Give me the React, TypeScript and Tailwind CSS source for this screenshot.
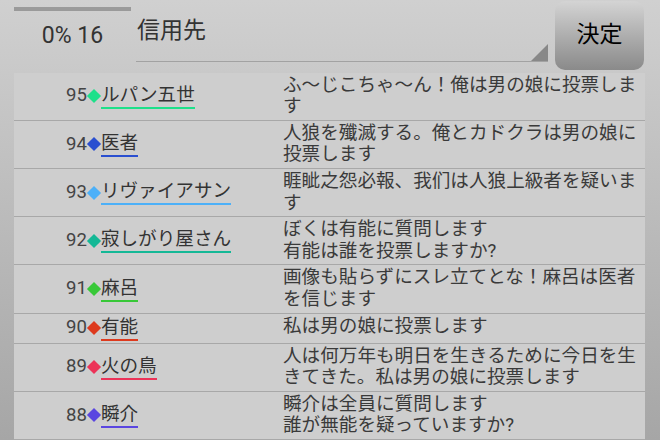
import React from "react";

interface Vote {
  no: number;
  name: string;
  color: string;
  message: string;
}

const votes: Vote[] = [
  { no: 95, name: "ルパン五世", color: "#1ee08a", message: "ふ～じこちゃ～ん！俺は男の娘に投票します" },
  { no: 94, name: "医者", color: "#2a4fd0", message: "人狼を殲滅する。俺とカドクラは男の娘に投票します" },
  { no: 93, name: "リヴァイアサン", color: "#4cb0f8", message: "睚眦之怨必報、我们は人狼上級者を疑います" },
  { no: 92, name: "寂しがり屋さん", color: "#14b896", message: "ぼくは有能に質問します\n有能は誰を投票しますか?" },
  { no: 91, name: "麻呂", color: "#38c838", message: "画像も貼らずにスレ立てとな！麻呂は医者を信じます" },
  { no: 90, name: "有能", color: "#dd3a1e", message: "私は男の娘に投票します" },
  { no: 89, name: "火の鳥", color: "#ec3358", message: "人は何万年も明日を生きるために今日を生きてきた。私は男の娘に投票します" },
  { no: 88, name: "瞬介", color: "#5a46e0", message: "瞬介は全員に質問します\n誰が無能を疑っていますか?" },
];

const VoteRow: React.FC<{ vote: Vote }> = ({ vote }) => (
  <div className="flex border-b border-[#a8a8a8] py-[2px]">
    <div className="w-[269px] flex-none flex items-center pl-[52px] text-[18.6px] leading-[21.6px]">
      <span className="text-[#444]">{vote.no}</span>
      <span className="w-[10px] h-[10px] rotate-45 mx-[2px]" style={{ backgroundColor: vote.color }} />
      <span className="text-[#333] border-b-2 leading-[23px]" style={{ borderColor: vote.color }}>
        {vote.name}
      </span>
    </div>
    <div className="flex-1 min-w-0 whitespace-pre-wrap break-all text-[18.6px] leading-[21.6px] text-[#3a3a3a]">
      {vote.message}
    </div>
  </div>
);

export default function App() {
  return (
    <div
      className="w-[660px] h-[440px] overflow-hidden bg-gradient-to-b from-[#d0d0d0] to-[#a6a6a6] pl-[14px] pr-[15px]"
      style={{ fontFamily: 'Roboto, "Noto Sans CJK JP", sans-serif' }}
    >
      <div className="h-[72.7px] flex items-start">
        <div className="w-[117px] flex-none flex flex-col">
          <div className="mt-[7px] h-[4px] bg-[#9a9a9a]" />
          <div className="mt-[11px] text-center text-[23px] leading-[28px] text-[#333]">0% 16</div>
        </div>
        <div className="ml-[5px] w-[412px] h-[62px] flex-none relative border-b-[1.5px] border-[#a2a2a2]">
          <div className="pl-[1px] pt-[16px] text-[23px] leading-[30px] text-[#333]">信用先</div>
          <div
            className="absolute right-0 bottom-0 w-[17px] h-[17px] bg-[#888]"
            style={{ clipPath: "polygon(100% 0, 100% 100%, 0 100%)" }}
          />
        </div>
        <button className="ml-[7px] mt-[1px] w-[89px] h-[69px] flex-none rounded-[10px] bg-gradient-to-b from-[#d4d4d4] to-[#8a8a8a] text-[23px] text-black">
          決定
        </button>
      </div>
      <div className="bg-[#cecece]">
        {votes.map((v) => (
          <VoteRow key={v.no} vote={v} />
        ))}
      </div>
    </div>
  );
}
